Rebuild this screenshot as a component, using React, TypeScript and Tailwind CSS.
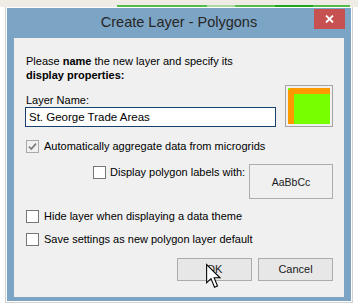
import React from "react";

function Box({ checked }: { checked?: boolean }) {
  return (
    <div
      className={
        "w-[13px] h-[13px] shrink-0 border flex items-center justify-center " +
        (checked ? "border-[#a9a9a9] bg-[#f1f1f1]" : "border-[#767676] bg-white")
      }
    >
      {checked && (
        <svg width="11" height="11" viewBox="0 0 11 11">
          <path d="M2 5.6 L4.3 8 L9 2.6" fill="none" stroke="#7d7d7d" strokeWidth="1.7" />
        </svg>
      )}
    </div>
  );
}

function Check({ checked, label, className }: { checked?: boolean; label: string; className?: string }) {
  return (
    <div className={"flex items-start " + (className ?? "")}>
      <Box checked={checked} />
      <span className="text-[11px] leading-[13px] text-black whitespace-nowrap">{label}</span>
    </div>
  );
}

export default function App() {
  return (
    <div className="w-[358px] h-[305px] bg-white overflow-hidden font-['Liberation_Sans',Arial,sans-serif]">
      {/* background strip behind dialog */}
      <div className="h-[7px] bg-[#efece6] flex items-end">
        <div className="ml-[117px] flex h-[2px] w-[233px]">
          <div className="w-[90px] bg-[#55bb4a]" />
          <div className="w-[28px] bg-[#a9daa1]" />
          <div className="w-[40px] bg-[#55bb4a]" />
          <div className="w-[38px] bg-[#22a622]" />
          <div className="w-[37px] bg-[#55bb4a]" />
        </div>
      </div>
      {/* shadow frame */}
      <div className="ml-[5px] w-[348px] border-x border-b border-[#d2d2d2] p-[1px]">
        {/* window */}
        <div className="w-[344px] bg-[#7ca4c4] flex flex-col pb-[4px]">
          {/* title bar */}
          <div className="h-[30px] flex items-start">
            <div className="w-[37px] shrink-0" />
            <div className="flex-1 h-[30px] flex items-center justify-center text-[14.5px] text-[#262626] whitespace-nowrap">
              Create Layer - Polygons
            </div>
            <div className="mt-[1px] mr-[6px] w-[31px] h-[20px] bg-[#c75050] flex items-center justify-center">
              <svg width="9" height="8" viewBox="0 0 9 8">
                <path d="M1 0.5 L8 7.5 M8 0.5 L1 7.5" stroke="white" strokeWidth="1.8" />
              </svg>
            </div>
          </div>
          {/* client area */}
          <div className="mx-[7px] h-[259px] bg-[#f0f0f0] pl-[11px] pr-[11px] pt-[16px] flex flex-col">
            <div className="flex items-end justify-between">
              <div className="w-[251px] flex flex-col">
                <p className="ml-[1px] text-[11px] leading-[14px] text-black whitespace-nowrap">
                  Please <b>name</b> the new layer and specify its
                  <br />
                  <b>display properties:</b>
                </p>
                <div className="ml-[1px] mt-[12px] text-[11px] leading-[13px] text-black">Layer Name:</div>
                <div className="h-[20px] border border-[#17406c] bg-white pl-[3px] text-[11.5px] leading-[18px] text-black whitespace-nowrap">
                  St. George Trade Areas
                </div>
              </div>
              <div className="w-[48px] h-[42px] border border-[#a3a3a3] p-[2px]">
                <svg width="42" height="36" viewBox="0 0 42 36" className="block">
                  <rect x="0" y="0" width="42" height="36" fill="#77ff00" />
                  <rect x="2" y="0" width="40" height="6" fill="#ff9900" />
                  <rect x="0" y="2" width="6" height="34" fill="#ff9900" />
                </svg>
              </div>
            </div>

            <Check checked label="Automatically aggregate data from microgrids" className="mt-[13px] ml-[1px] gap-[5px]" />

            <div className="mt-[11px] flex items-start">
              <Check label="Display polygon labels with:" className="ml-[68px] mt-[2px] gap-[4px]" />
              <div className="ml-auto w-[84px] h-[35px] border border-[#adadad] bg-[#f0f0f0] flex items-center justify-center pt-[3px] text-[10.5px] text-[#1a1a1a]">
                AaBbCc
              </div>
            </div>

            <Check label="Hide layer when displaying a data theme" className="mt-[11px] ml-[1px] gap-[5px]" />
            <Check label="Save settings as new polygon layer default" className="mt-[10px] ml-[1px] gap-[5px]" />

            <div className="mt-[12px] flex justify-end gap-[6px]">
              <div className="relative w-[75px] h-[23px] border border-[#acacac] bg-[#e7e7e7] flex items-center justify-center text-[11px] text-[#1a1a1a]">
                OK
                <svg
                  width="15"
                  height="25"
                  viewBox="0 0 12 20"
                  className="absolute left-[28px] top-[5px] overflow-visible"
                >
                  <path
                    d="M0.5 0.5 V15 L4 11.7 L6.8 18.6 L9.2 17.6 L6.5 11 H11.2 Z"
                    fill="white"
                    stroke="black"
                    strokeWidth="0.85"
                    strokeLinejoin="miter"
                  />
                </svg>
              </div>
              <div className="w-[75px] h-[23px] border border-[#acacac] bg-[#e7e7e7] flex items-center justify-center text-[11px] text-[#1a1a1a]">
                Cancel
              </div>
            </div>
          </div>
        </div>
      </div>
    </div>
  );
}
